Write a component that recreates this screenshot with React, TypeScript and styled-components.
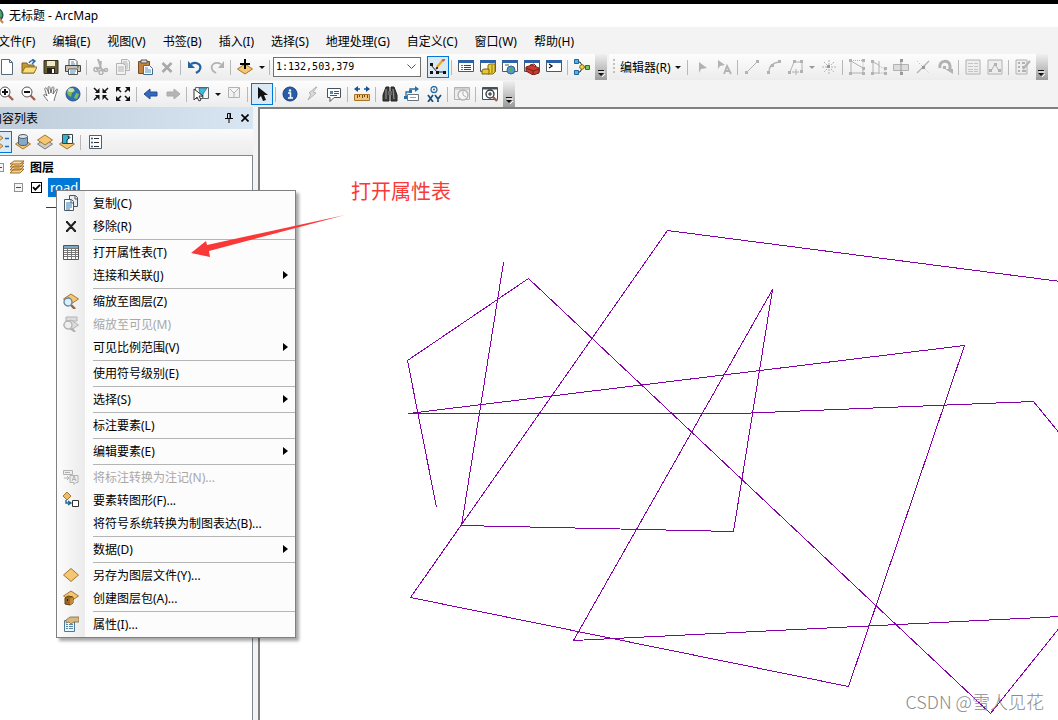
import React from "react";
import styled, { createGlobalStyle, css } from "styled-components";

const GlobalStyle = createGlobalStyle`
  * { box-sizing: border-box; }
  html, body { margin: 0; padding: 0; background: #f3f3f3; }
  body, button, select, input {
    font-family: "Noto Sans", "Noto Sans CJK SC", sans-serif;
    font-size: 12px;
    color: #000;
  }
`;

const Page = styled.div`
  position: relative;
  display: flex;
  flex-direction: column;
  min-height: 100vh;
  overflow: hidden;
  background: #f3f3f3;
`;

const TitleBar = styled.header`
  display: flex;
  align-items: center;
  gap: 5px;
  height: 27px;
  border-top: 4px solid #000;
  background: #fff;
`;

const TitleLogo = styled.svg`
  width: 16px;
  height: 16px;
  margin-left: -12px;
`;

const Title = styled.h1`
  margin: 0;
  font-size: 12px;
  font-weight: 400;
  line-height: 22px;
`;

const MenuBar = styled.nav`
  display: flex;
  gap: 1px;
  height: 27px;
  margin-left: -10px;
`;

const plainButton = css`
  display: flex;
  align-items: center;
  border: 0;
  background: none;
  padding: 0;
  white-space: nowrap;
`;

const MenuBarItem = styled.button`
  ${plainButton}
  padding: 0 8px;
`;

const ToolbarRow = styled.div`
  display: flex;
  height: 27px;
`;

const Toolbar = styled.div<{ $pull?: boolean }>`
  display: flex;
  align-items: center;
  height: 26px;
  margin-left: ${(p) => (p.$pull ? "-4px" : "2px")};
  background: linear-gradient(#fdfdfd, #ececec);
`;

const ToolButton = styled.button<{ $active?: boolean }>`
  display: flex;
  align-items: center;
  justify-content: center;
  flex: none;
  width: 22px;
  height: 22px;
  padding: 0;
  border: 1px solid ${(p) => (p.$active ? "#0078d7" : "transparent")};
  background: ${(p) => (p.$active ? "#dbe9f5" : "transparent")};
`;

const CaretButton = styled.button`
  ${plainButton}
  justify-content: center;
  width: 11px;
  height: 22px;
`;

const LabelButton = styled.button`
  ${plainButton}
  gap: 4px;
  height: 22px;
  padding: 0 4px 0 5px;
`;

const Separator = styled.span`
  flex: none;
  width: 1px;
  height: 15px;
  margin: 0 3px 0 2px;
  background: #b8b8b8;
`;

const Grip = styled.span`
  width: 2px;
  height: 16px;
  margin-left: 4px;
  background: repeating-linear-gradient(#c0c0c0 0 2px, transparent 2px 4px);
`;

const Overflow = styled.button`
  display: flex;
  align-items: flex-end;
  justify-content: center;
  align-self: stretch;
  width: 12px;
  margin-left: 2px;
  padding: 0 0 3px;
  border: 0;
  background: linear-gradient(#f0f0f0, #9c9c9c);
`;

const ScaleBox = styled.label`
  display: flex;
  align-items: center;
  width: 148px;
  height: 20px;
  margin-right: 6px;
  padding-right: 4px;
  border: 1px solid #707070;
  background: #fff;
`;

const ScaleSelect = styled.select`
  flex: 1;
  min-width: 0;
  appearance: none;
  border: 0;
  padding: 0 0 0 2px;
  background: none;
  font-family: "DejaVu Sans Mono", monospace;
  font-size: 10px;
  line-height: 16px;
`;

const Workspace = styled.div`
  display: flex;
  flex: 1;
  gap: 5px;
  margin-top: -1px;
`;

const Contents = styled.aside`
  display: flex;
  flex-direction: column;
  flex: none;
  width: 253px;
`;

const PanelHeader = styled.div`
  display: flex;
  align-items: center;
  height: 22px;
  background: linear-gradient(90deg, #bfcddb, #d8e5f2);
`;

const PanelTitle = styled.h2`
  flex: 1;
  margin: 0 0 0 -10px;
  font-size: 12px;
  font-weight: 400;
`;

const PanelButton = styled.button`
  ${plainButton}
  justify-content: center;
  width: 16px;
  height: 18px;
`;

const PanelTools = styled.div`
  display: flex;
  align-items: center;
  height: 26px;
  margin-left: -10px;
  background: linear-gradient(#fafafa, #ececec);
`;

const Tree = styled.div`
  flex: 1;
  padding-top: 1px;
  border: 1px solid #828790;
  border-left: 0;
  border-bottom: 0;
  background: #fff;
`;

const TreeRow = styled.div<{ $level: number }>`
  display: flex;
  align-items: center;
  gap: ${(p) => (p.$level ? "8px" : "5px")};
  height: 20px;
  margin-left: ${(p) => (p.$level ? "14px" : "-5px")};
`;

const TreeGroup = styled.span`
  font-weight: 700;
`;

const Expander = styled.button`
  display: flex;
  align-items: center;
  justify-content: center;
  width: 9px;
  height: 9px;
  padding: 0;
  border: 1px solid #919191;
  background: #f5f5f5;
  &::before { content: ""; width: 5px; height: 1px; background: #31479b; }
`;

const LayerLabel = styled.label`
  display: flex;
  align-items: center;
  gap: 6px;
`;

const LayerCheck = styled.input`
  appearance: none;
  width: 11px;
  height: 11px;
  margin: 0;
  border: 1px solid #000;
  background: #fff;
  &:checked {
    background: #fff url("data:image/svg+xml,%3Csvg xmlns='http://www.w3.org/2000/svg' viewBox='0 0 9 9'%3E%3Cpath d='M1 4.2l2.3 2.4L8 1.8' fill='none' stroke='black' stroke-width='1.8'/%3E%3C/svg%3E");
  }
`;

const LayerName = styled.span`
  padding: 0 2px;
  background: #0078d7;
  color: #fff;
  font-size: 13px;
  line-height: 19px;
`;

const LayerSymbol = styled.div`
  width: 32px;
  height: 1px;
  margin: 10px 0 0 46px;
  background: #8400a8;
`;

const MapView = styled.main`
  position: relative;
  flex: 1;
  overflow: hidden;
  border-top: 2px solid #808080;
  border-left: 2px solid #808080;
  background: #fff;
`;

const MapLines = styled.svg`
  position: absolute;
  left: 0;
  top: 0;
  width: 798px;
  height: 611px;
  fill: none;
  stroke: #8400a8;
  shape-rendering: crispEdges;
`;

const Watermark = styled.span`
  position: absolute;
  right: 14px;
  bottom: 5px;
  color: #8c8c8c;
  font-family: "Noto Sans CJK SC", sans-serif;
  font-size: 18px;
  font-weight: 300;
  line-height: 27px;
`;

const Note = styled.p`
  position: absolute;
  left: 351px;
  top: 179px;
  margin: 0;
  color: #fb3838;
  font-size: 20px;
  line-height: 26px;
`;

const NoteArrow = styled.svg`
  position: absolute;
  left: 190px;
  top: 212px;
  width: 160px;
  height: 50px;
  pointer-events: none;
`;

const ContextMenu = styled.div`
  position: absolute;
  left: 56px;
  top: 190px;
  width: 240px;
  padding: 1px 0;
  border: 1px solid #808080;
  background: linear-gradient(90deg, #fcfcfc, #ebebeb) 0 0 / 28px 100% no-repeat #fcfcfc;
  box-shadow: 3px 3px 3px rgba(0, 0, 0, 0.35);
`;

const ContextItem = styled.button`
  ${plainButton}
  width: 100%;
  height: 23px;
  padding: 0 7px 2px 0;
  text-align: left;
  &:disabled { color: #a8a8a8; }
`;

const ContextIcon = styled.span`
  display: flex;
  justify-content: center;
  width: 28px;
  margin-right: 8px;
`;

const ContextText = styled.span`
  flex: 1;
`;

const ContextRule = styled.hr`
  height: 1px;
  margin: 1px 0 1px 36px;
  border: 0;
  background: #b5b5b5;
`;

const Glyph = styled.svg`
  flex: none;
  display: block;
  fill: none;
`;

const g = "#b2b2b2";

const diamond = (y: number, fill = "#f3c774", stroke = "#a8742a") => (
  <path d={`M8 ${y}l7.5 5l-7.5 5l-7.5 -5z`} fill={fill} stroke={stroke} />
);
const lens = (x: number, y: number, color: string, tint: string, handle: string) => (
  <>
    <path d={`M${x + 3} ${y + 3}l4 4`} stroke={handle} strokeWidth="2.4" />
    <circle cx={x} cy={y} r="4" fill={tint} stroke={color} strokeWidth="1.3" />
  </>
);
const windowFrame = (
  <>
    <path d="M.5 1.5h15v11H.5z" fill="#fff" stroke="#505860" />
    <path d="M0 1h16v3H0z" fill="#2d62a8" />
  </>
);
const node = (x: number, y: number, c = g) => <rect x={x} y={y} width="3" height="3" fill={c} />;

const icons: Record<string, React.ReactNode> = {
  new: <path d="M2.5 .5h8l3 3v12h-11zM10.5 .5v3h3" fill="#fff" stroke="#566b7a" />,
  open: (
    <>
      <path d="M1 14V4h5l1 2h6v8z" fill="#c49a35" stroke="#7d651c" />
      <path d="M1 14l3-6h12l-3 6z" fill="#f7dc7d" stroke="#8c7226" />
      <path d="M8 4c1-2 3-3 5-2M11 0l3 2-3 3" stroke="#246aaa" strokeWidth="1.4" />
    </>
  ),
  save: (
    <>
      <path d="M1 1.5h14v13H1z" fill="#635a36" stroke="#332e1d" />
      <path d="M4 2h8v5H4z" fill="#efe9c5" />
      <path d="M4 9h8v5H4z" fill="#24221b" />
      <path d="M9 10h2v4H9z" fill="#fff" />
    </>
  ),
  print: (
    <>
      <path d="M4 7V.5h6l2 2V7" fill="#fff" stroke="#555" />
      <path d="M.5 6.5h15v6H.5z" fill="#c8c3b6" stroke="#444" />
      <path d="M3.500 10h9v5.500h-9z" fill="#fff" stroke="#555" />
      <path d="M5 12h6M5 14h5M6 3h3M6 5h4" stroke="#4b8abb" />
      <path d="M12 8h2" stroke="#287228" />
    </>
  ),
  cut: (
    <>
      <path d="M5 0l3 9M8 2l-1 7 5 3M7 9l-4 1" stroke={g} strokeWidth="2" />
      <circle cx="3" cy="10.500" r="2" stroke={g} strokeWidth="1.500" />
      <circle cx="8" cy="13.500" r="2" stroke={g} strokeWidth="1.500" />
      <circle cx="13" cy="11" r="1.500" stroke={g} strokeWidth="1.500" />
    </>
  ),
  copyOff: (
    <>
      <path d="M6.500 .5h6l2 2v9h-8z" fill="#eee" stroke={g} />
      <path d="M1.500 4.500h7l2 2v9h-9z" fill="#f3f3f3" stroke={g} />
      <path d="M3 8h6M3 10h6M3 12h6M8 3h4M8 5h5M11 7h2M11 9h2" stroke={g} />
    </>
  ),
  copy: (
    <>
      <path d="M6.500 .5h6l2 2v9h-8z" fill="#e6eef3" stroke="#4c5660" />
      <path d="M1.500 4.500h7l2 2v9h-9z" fill="#fff" stroke="#4c5660" />
      <path d="M3 8h5M3 10h6M3 12h6M3 14h4" stroke="#267dbd" />
      <path d="M12 1v3h2M8 5v3h3" stroke="#4c5660" />
    </>
  ),
  paste: (
    <>
      <path d="M1.500 2.500h11v12h-11z" fill="#c3833e" stroke="#7a4d20" />
      <path d="M4 1h6v3H4z" fill="#ddd" stroke="#555" />
      <path d="M6.500 6.500h6l3 3v6h-9z" fill="#fff" stroke="#456a8c" />
      <path d="M8 9h3M8 11h6M8 13h6" stroke="#4b91c5" />
    </>
  ),
  del: <path d="M3.500 4l9 9M12.500 4l-9 9" stroke="#a9a9a9" strokeWidth="2.600" />,
  undo: (
    <>
      <path d="M4 5c6-3 12 1 8 7l-3 2" stroke="#24629f" strokeWidth="2.200" />
      <path d="M1 2v7h7z" fill="#24629f" />
    </>
  ),
  redo: (
    <>
      <path d="M12 5C6 2 0 6 4 12l3 2" stroke={g} strokeWidth="1.800" />
      <path d="M15 2v7H9z" fill={g} />
    </>
  ),
  add: (
    <>
      {diamond(5)}
      <path d="M8 0v10M3 5h10" stroke="#000" strokeWidth="2" />
    </>
  ),
  sketch: (
    <>
      <path d="M1 6l6 7h8" stroke="#222" />
      {node(0, 4, "#111")}{node(0, 12, "#111")}{node(6, 12, "#111")}{node(13, 12, "#111")}
      <path d="M7 8l6-7" stroke="#efa91c" strokeWidth="2.400" />
      <path d="M12.500 2l2-2" stroke="#d25143" strokeWidth="2.400" />
      <path d="M6 10l2-1-1-1z" fill="#222" stroke="#222" />
    </>
  ),
  toc: (
    <>
      {windowFrame}
      <path d="M3 6.500h2M3 8.500h2M3 10.500h2" stroke="#287ac1" />
      <path d="M6 6.500h7M6 8.500h7M6 10.500h7" stroke="#444" />
    </>
  ),
  catalog: (
    <>
      {windowFrame}
      <path d="M8 6l2-1h5v8l-2 2H8z" fill="#f0cf35" stroke="#806b16" />
      <path d="M2 11l2-1h5v5H2z" fill="#e7c72b" stroke="#776211" />
      <path d="M12 6v8" stroke="#8a7418" />
    </>
  ),
  search: (
    <>
      {windowFrame}
      <circle cx="9" cy="11" r="4" fill="#4e99d4" stroke="#326597" />
      <path d="M7 9l3-1 1 3-3 2z" fill="#61aa4c" />
      <path d="M3 6h4" stroke="#555" />
    </>
  ),
  toolbox: (
    <>
      {windowFrame}
      <path d="M2 8l6-2 7 3v5l-6 2-7-4z" fill="#c93a2d" stroke="#772018" />
      <path d="M2 9l7 3 6-2M9 12v4M6 6l4-1 2 2" stroke="#751e17" />
    </>
  ),
  python: (
    <>
      {windowFrame}
      <path d="M3 5l3 2-3 2" stroke="#111" strokeWidth="1.300" />
    </>
  ),
  model: (
    <>
      <path d="M4 3h2l3 5-3 5H4M9 8h5" stroke="#222" />
      <path d="M.5 .5h4v4h-4zM.5 11.500h4v4h-4z" fill="#58b0e8" stroke="#1c649e" />
      <circle cx="8" cy="8" r="2.300" fill="#f4d548" stroke="#7c6919" />
      <path d="M11.500 6.500h4v4h-4z" fill="#75c455" stroke="#327327" />
    </>
  ),
  editArrow: <path d="M5 3v11l2-4 6-1z" fill={g} />,
  editLabel: (
    <>
      <path d="M2 1v9l2-3 5-1z" fill={g} />
      <path d="M8 15l3-8 4 8M9 12h5" stroke={g} strokeWidth="1.800" />
    </>
  ),
  line: <><path d="M3 13L13 3" stroke={g} />{node(1, 12)}{node(12, 1)}</>,
  arc: <><path d="M3 13C3 8 6 4 13 3" stroke={g} strokeWidth="1.300" />{node(1, 12)}{node(5, 5)}{node(12, 1)}</>,
  trace: <><path d="M2 13L6 3h8v10M4 13h7M8 10v6" stroke={g} />{node(0, 12)}{node(5, 1)}{node(12, 1)}{node(12, 11)}</>,
  point: (
    <>
      <path d="M8 1v5M8 10v5M1 8h5M10 8h5M3 3l3 3M10 10l3 3M13 3l-3 3M6 10l-3 3" stroke={g} strokeDasharray="2 1" />
      {node(6, 6, "#999")}
    </>
  ),
  vertices: <><path d="M2 2v12h12V9L2 2" stroke={g} /><path d="M4 1.500h10V9" stroke={g} strokeDasharray="1 1" />{node(0, 0)}{node(0, 13)}{node(13, 0)}{node(13, 8)}{node(13, 13)}</>,
  reshape: <><path d="M2 3v11h6M2 3l6 3M8 2v13" stroke={g} /><path d="M8 7l6 3v4H8" stroke={g} strokeDasharray="1 1" />{node(0, 1)}{node(0, 13)}{node(13, 8)}{node(13, 13)}</>,
  cutPoly: <><path d="M.5 5.500h15v6H.5z" fill="#ddd" stroke={g} /><path d="M8 1v14" stroke="#999" />{node(7, 0, "#999")}{node(7, 13, "#999")}</>,
  split: <><path d="M2 14L14 2" stroke={g} strokeWidth="1.300" /><path d="M2 2l12 12" stroke={g} strokeDasharray="1 2" />{node(7, 7, "#999")}</>,
  rotate: <><path d="M3 9C1 1 13 0 13 7v4" stroke={g} strokeWidth="3" /><path d="M8 10h8v5z" fill={g} />{node(6, 7)}</>,
  attributes: <><path d="M1 1h14v14H1z" fill="#eee" stroke={g} /><path d="M3 4.500h5M9 4.500h4M3 7.500h5M9 7.500h4M3 10.500h5M9 10.500h4M3 12.500h5M9 12.500h4" stroke="#c4c4c4" /></>,
  sketchProps: <><path d="M1 1h14v14H1z" fill="#eee" stroke={g} /><path d="M4 12l4-7 4 7" stroke={g} />{node(2, 10)}{node(7, 4)}{node(11, 10)}</>,
  create: <><path d="M1 1h11v14H1z" fill="#eee" stroke={g} /><path d="M3 4h2M3 8h2M3 12h2M7 4h3M7 8h3M7 12h4" stroke={g} strokeWidth="2" /><path d="M8 10l7-8" stroke={g} strokeWidth="2" /></>,
  zoomIn: <><path d="M9 9l5 5" stroke="#9c5b4c" strokeWidth="2.300" /><circle cx="6" cy="6" r="5" fill="#fff" stroke="#555" /><path d="M3 6h6M6 3v6" stroke="#111" strokeWidth="2" /></>,
  zoomOut: <><path d="M9 9l5 5" stroke="#9c5b4c" strokeWidth="2.300" /><circle cx="6" cy="6" r="5" fill="#fff" stroke="#555" /><path d="M3 6h6" stroke="#111" strokeWidth="2" /></>,
  pan: <path d="M5 15L1 10c-1-2 1-2 3 0L2 4c-1-2 1-3 2-1l2 5-1-6c0-2 2-2 2 0l1 5 1-5c0-2 2-1 2 0l-1 6 3-4c1-2 2-1 1 1l-2 6-1 4" fill="#fff" stroke="#555" strokeWidth=".8" />,
  globe: (
    <>
      <circle cx="8" cy="8" r="7" fill="#2e72b6" stroke="#285689" />
      <path d="M3 3l5-1 2 3-3 2-1 4-3-2-1-3zM11 7l3 1-2 5-3-1z" fill="#83bb57" />
      <ellipse cx="6" cy="4" rx="3" ry="2" fill="#fff" opacity=".55" />
    </>
  ),
  zoomInFixed: (
    <>
      <path d="M1 2l4 4M15 2l-4 4M1 14l4-4M15 14l-4-4" stroke="#111" strokeWidth="1.500" />
      <path d="M6.500 2v5H2zM9.500 2v5H14zM6.500 14V9H2zM9.500 14V9H14z" fill="#111" />
    </>
  ),
  zoomOutFixed: (
    <>
      <path d="M6 6L2 2M10 6l4-4M6 10l-4 4M10 10l4 4" stroke="#111" strokeWidth="1.500" />
      <path d="M1 6V1h5zM15 6V1h-5zM1 10v5h5zM15 10v5h-5z" fill="#111" />
    </>
  ),
  back: <path d="M1 8l6-5v3h7v4H7v3z" fill="#3469bd" stroke="#234f97" />,
  forward: <path d="M15 8L9 3v3H2v4h7v3z" fill="#b5b5b5" stroke="#aaa" />,
  select: (
    <>
      <path d="M2.500 1.500h13v11h-13z" fill="#f5f5f5" stroke="#606870" />
      <path d="M6 2h8l-4 6v4l-3-4z" fill="#39bce5" stroke="#555" strokeWidth=".7" />
      <path d="M1 3v11l3-3 2 4 2-1-2-4h4z" fill="#fff" stroke="#333" />
    </>
  ),
  clear: <path d="M2.500 1.500h11v10h-11zM4 3l4 4 5-5M8 7v4" fill="#f1f1f1" stroke={g} />,
  pointer: <path d="M4 1v12l3-3 2 5 3-1-2-5h4z" fill="#111" />,
  info: (
    <>
      <circle cx="8" cy="8" r="7" fill="#285ea8" stroke="#183f79" />
      <path d="M6 7h2.500v5M6 12h5" stroke="#fff" strokeWidth="1.500" />
      <circle cx="8" cy="4.500" r="1.200" fill="#fff" />
    </>
  ),
  bolt: <path d="M12 1L5 7l2 1-3 6 8-7-3-1 4-5z" fill="#ddd" stroke={g} />,
  popup: (
    <>
      <path d="M1.500 2.500h13v9H8l-4 4v-4H1.500z" fill="#fff" stroke="#46535e" />
      <path d="M4 5h3v3H4z" fill="#4689be" />
      <path d="M8 5.500h5M8 7.500h5M4 9.500h7" stroke="#555" />
    </>
  ),
  measure: (
    <>
      <path d="M1 3h5M10 3h5" stroke="#17538b" strokeWidth="1.600" />
      <path d="M4 0v6L0 3zM12 0v6l4-3z" fill="#17538b" />
      <path d="M.5 8.500h15v6H.5z" fill="#f0c77c" stroke="#a77428" />
      <path d="M3.500 9v3M5.500 9v2M8.500 9v3M10.500 9v2M13.500 9v3" stroke="#6b4a18" />
    </>
  ),
  find: (
    <>
      <path d="M4 1h3v14H1V9zM9 1h3l3 8v6H9z" fill="#3c3c3c" stroke="#202020" />
      <path d="M6 5h4v4H6z" fill="#666" />
      <path d="M4 3v10M11 3l1 10" stroke="#999" />
    </>
  ),
  route: (
    <>
      <path d="M3.500 8.500h11v6h-11z" fill="#fff" stroke="#68747d" />
      <path d="M2 11V6h4V3h6" stroke="#286da2" strokeWidth="1.300" />
      <path d="M11 0l4 3-4 3z" fill="#286da2" />
      {node(0, 10, "#286da2")}{node(5, 4, "#286da2")}
      <path d="M6 11.500h6" stroke="#999" />
    </>
  ),
  xy: (
    <>
      <circle cx="8" cy="3.500" r="3" stroke="#286da2" strokeWidth="1.300" />
      <circle cx="8" cy="3.500" r="1" fill="#286da2" />
      <path d="M2 9l5 7M7 9l-5 7M9 9l3 4 3-4M12 12v4" stroke="#174f80" strokeWidth="1.700" />
    </>
  ),
  time: (
    <>
      <path d="M.5 1.500h15v12H.5zM1 3h14" fill="#eee" stroke={g} />
      <circle cx="9" cy="9" r="5" fill="#f5f5f5" stroke={g} strokeWidth="1.300" />
      <path d="M9 5v4l3 2" stroke={g} />
    </>
  ),
  viewer: (
    <>
      <path d="M.5 1.500h15v12H.5z" fill="#fff" stroke="#44515b" />
      <path d="M1 2.500h14" stroke="#44515b" strokeWidth="2" />
      {lens(8, 8, "#333", "#f0f7fc", "#9b6452")}
      <path d="M6 8h4M8 6v4" stroke="#222" />
    </>
  ),
  drawOrder: (
    <>
      <path d="M6 1l4 3-4 3-4-3zM6 9l4 3-4 3-4-3z" fill="#f1c47a" stroke="#a97b36" />
      <path d="M12 4.500h4M12 12.500h4" stroke="#246aaa" strokeWidth="1.600" />
    </>
  ),
  source: (
    <>
      {diamond(5)}
      <path d="M3.500 2v8c1 2 8 2 9 0V2" fill="#86a8cb" stroke="#505c68" />
      <ellipse cx="8" cy="2.500" rx="4.500" ry="2" fill="#dce6ef" stroke="#505c68" />
    </>
  ),
  visible: <>{diamond(5, "#ccc", "#777")}{diamond(1)}</>,
  selection: (
    <>
      {diamond(5)}
      <path d="M3.500 .5h10v9h-10z" fill="#fff" stroke="#34444f" />
      <path d="M4 1h6l2 3-4 2v3H4z" fill="#2fb3cf" />
      <path d="M9 2l1 2-2 2v3" stroke="#222" />
    </>
  ),
  options: (
    <>
      <path d="M2.500 1.500h12v13h-12z" fill="#fff" stroke="#4e6171" />
      <path d="M7 4.500h5M7 8.500h5M7 12.500h5" stroke="#333" />
      <circle cx="5" cy="4.500" r="1" fill="#2c5585" /><circle cx="5" cy="8.500" r="1" fill="#2c5585" /><circle cx="5" cy="12.500" r="1" fill="#2c5585" />
    </>
  ),
  layers: (
    <>
      <path d="M1 14l4-4h10l-4 4zM1 11l4-4h10l-4 4zM1 8l4-4h10l-4 4z" fill="#f4d08b" stroke="#a36e26" />
      <path d="M1 5l4-3h10l-4 3z" fill="#f9dfaa" stroke="#a36e26" />
    </>
  ),
  remove: <path d="M4 4l8 9M12 4l-8 9M3 4h2M11 4h2M3 13h2M11 13h2" stroke="#222" strokeWidth="2" />,
  table: (
    <>
      <path d="M.5 1.500h15v14H.5z" fill="#fff" stroke="#555" />
      <path d="M1 3h14" stroke="#7ba9c6" strokeWidth="2" />
      <path d="M1 4.500h14M1 6.500h14M1 8.500h14M1 10.500h14M1 12.500h14M4.500 4v11M8.500 4v11M12.500 4v11" stroke="#777" />
    </>
  ),
  zoomLayer: <>{diamond(1)}{lens(5, 9, "#6485a0", "#d9effa", "#9b5f43")}</>,
  zoomVisible: <><path d="M3 1h11v4H3z" fill="#ddd" stroke={g} />{diamond(4, "#ddd", g)}{lens(5, 9, g, "#eee", g)}</>,
  convertLabel: (
    <>
      <path d="M.5 1.500h9v4h-9zM7 6.500h8v7h-2l-2 2v-2H7zM2 3.500h5" fill="#eee" stroke={g} />
      <path d="M1 9h5M4 7l2 2-2 2M9 12l2-5 2 5M9.500 10.500h3" stroke={g} />
    </>
  ),
  convertGraphic: (
    <>
      <path d="M4 0l4 4-4 4-4-4z" fill="#efbd67" stroke="#a87629" />
      <path d="M3 8v3h4M5 9l3 2-3 2" stroke="#1b6792" strokeWidth="1.400" />
      <path d="M9.500 8.500h6v6h-6z" fill="#fff" stroke="#333" />
    </>
  ),
  layerFile: <path d="M8 1.500l7.500 6.500L8 14.500 .5 8z" fill="#f3c774" stroke="#a8742a" />,
  layerPackage: (
    <>
      {diamond(1)}
      <path d="M2 8l3-2 5 1v6l-3 2-5-1z" fill="#9a6825" stroke="#60400e" />
      <path d="M7 9l3-2v6l-3 2z" fill="#c48b3b" />
      <path d="M4 9h1v2H4z" fill="#2c1b04" />
    </>
  ),
  properties: (
    <>
      <path d="M1.500 4.500h10v11h-10z" fill="#eaf5fc" stroke="#4e7896" />
      <path d="M3 8.500h2M6 8.500h4M3 10.500h2M6 10.500h4M3 12.500h2M6 12.500h4" stroke="#5686a9" />
      <path d="M3 4l4-3 9 0v5l-5 0-3 2-2-2-3 1z" fill="#d6b880" stroke="#826740" strokeWidth=".8" />
    </>
  ),
};

const Icon = ({ name }: { name: string }) => (
  <Glyph width="16" height="16" viewBox="0 0 16 16" aria-hidden="true">{icons[name]}</Glyph>
);
const Caret = ({ color = "#111" }: { color?: string }) => (
  <Glyph width="6" height="3" viewBox="0 0 6 3" aria-hidden="true"><path d="M0 0h6L3 3z" fill={color} /></Glyph>
);
const OverflowButton = ({ label }: { label: string }) => (
  <Overflow aria-label={label}>
    <Glyph width="7" height="7" viewBox="0 0 7 7">
      <path d="M1 2h6M4 7l3-3" stroke="#fff" />
      <path d="M0 .5h6" stroke="#111" />
      <path d="M0 3h6L3 6z" fill="#111" />
    </Glyph>
  </Overflow>
);

type Tool = string | [name: string, label: string];
const Tools = ({ items, active }: { items: Tool[]; active?: string }) => (
  <>
    {items.map((item, i) => {
      if (item === "|") return <Separator key={i} />;
      if (item === "v" || item === "v-off")
        return <CaretButton key={i} aria-label="更多"><Caret color={item === "v" ? "#111" : "#999"} /></CaretButton>;
      const [name, label] = item as [string, string];
      return (
        <ToolButton key={i} aria-label={label} $active={name === active}>
          <Icon name={name} />
        </ToolButton>
      );
    })}
  </>
);

const standardTools: Tool[] = [
  ["new", "新建"], ["open", "打开"], ["save", "保存"], ["print", "打印"], "|",
  ["cut", "剪切"], ["copyOff", "复制"], ["paste", "粘贴"], ["del", "删除"], "|",
  ["undo", "撤消"], ["redo", "恢复"], "|", ["add", "添加数据"], "v", "|",
];
const windowTools: Tool[] = [
  ["sketch", "编辑器工具条"], "|", ["toc", "内容列表"], ["catalog", "目录"], ["search", "搜索"],
  ["toolbox", "工具箱"], ["python", "Python"], "|", ["model", "模型构建器"],
];
const editorTools: Tool[] = [
  "|", ["editArrow", "编辑工具"], ["editLabel", "编辑注记"], "|",
  ["line", "直线段"], ["arc", "弧段"], ["trace", "追踪"], "v-off", ["point", "点"], "|",
  ["vertices", "编辑折点"], ["reshape", "整形"], ["cutPoly", "裁剪面"], ["split", "分割"], ["rotate", "旋转"], "|",
  ["attributes", "属性"], ["sketchProps", "草图属性"], "|", ["create", "创建要素"],
];
const mapTools: Tool[] = [
  ["zoomIn", "放大"], ["zoomOut", "缩小"], ["pan", "平移"], ["globe", "全图"], "|",
  ["zoomInFixed", "固定比例放大"], ["zoomOutFixed", "固定比例缩小"], "|",
  ["back", "上一视图"], ["forward", "下一视图"], "|", ["select", "选择要素"], "v", ["clear", "清除选择"], "|",
  ["pointer", "选择元素"], "|", ["info", "识别"], ["bolt", "超链接"], ["popup", "HTML 弹出窗口"], "|",
  ["measure", "测量"], "|", ["find", "查找"], ["route", "查找路径"], ["xy", "转到 XY"], "|",
  ["time", "时间滑块"], "|", ["viewer", "查看器"],
];
const contentsTools: Tool[] = [
  ["drawOrder", "按绘制顺序列出"], ["source", "按源列出"], ["visible", "按可见性列出"],
  ["selection", "按选择列出"], "|", ["options", "选项"],
];

const menus = ["文件(F)", "编辑(E)", "视图(V)", "书签(B)", "插入(I)", "选择(S)", "地理处理(G)", "自定义(C)", "窗口(W)", "帮助(H)"];

type Entry = { text: string; icon?: string; sub?: boolean; off?: boolean };
const contextGroups: Entry[][] = [
  [{ text: "复制(C)", icon: "copy" }, { text: "移除(R)", icon: "remove" }],
  [{ text: "打开属性表(T)", icon: "table" }, { text: "连接和关联(J)", sub: true }],
  [
    { text: "缩放至图层(Z)", icon: "zoomLayer" },
    { text: "缩放至可见(M)", icon: "zoomVisible", off: true },
    { text: "可见比例范围(V)", sub: true },
  ],
  [{ text: "使用符号级别(E)" }],
  [{ text: "选择(S)", sub: true }],
  [{ text: "标注要素(L)" }],
  [{ text: "编辑要素(E)", sub: true }],
  [
    { text: "将标注转换为注记(N)...", icon: "convertLabel", off: true },
    { text: "要素转图形(F)...", icon: "convertGraphic" },
    { text: "将符号系统转换为制图表达(B)..." },
  ],
  [{ text: "数据(D)", sub: true }],
  [{ text: "另存为图层文件(Y)...", icon: "layerFile" }, { text: "创建图层包(A)...", icon: "layerPackage" }],
  [{ text: "属性(I)...", icon: "properties" }],
];

export default function App() {
  return (
    <Page>
      <GlobalStyle />
      <TitleBar>
        <TitleLogo viewBox="0 0 16 16" aria-hidden="true">
          <circle cx="8" cy="7" r="7" fill="#276c72" stroke="#163f4b" />
          <path d="M8 2l5 1 1 5-4 3z" fill="#55a361" />
          <path d="M10 9l5 6" stroke="#c18452" strokeWidth="2" />
        </TitleLogo>
        <Title>无标题 - ArcMap</Title>
      </TitleBar>
      <MenuBar>
        {menus.map((m) => <MenuBarItem key={m}>{m}</MenuBarItem>)}
      </MenuBar>
      <ToolbarRow>
        <Toolbar $pull>
          <Tools items={standardTools} />
          <ScaleBox>
            <ScaleSelect aria-label="比例尺">
              <option>1:132,503,379</option>
            </ScaleSelect>
            <Glyph width="9" height="6" viewBox="0 0 9 6" aria-hidden="true">
              <path d="M.5 .5l4 4 4-4" stroke="#555" />
            </Glyph>
          </ScaleBox>
          <Tools items={windowTools} active="sketch" />
          <OverflowButton label="标准工具条选项" />
        </Toolbar>
        <Toolbar>
          <Grip />
          <LabelButton>编辑器(R)<Caret /></LabelButton>
          <Tools items={editorTools} />
          <OverflowButton label="编辑器工具条选项" />
        </Toolbar>
      </ToolbarRow>
      <ToolbarRow>
        <Toolbar $pull>
          <Tools items={mapTools} active="pointer" />
          <OverflowButton label="工具条选项" />
        </Toolbar>
      </ToolbarRow>
      <Workspace>
        <Contents>
          <PanelHeader>
            <PanelTitle>内容列表</PanelTitle>
            <PanelButton aria-label="自动隐藏">
              <Glyph width="8" height="10" viewBox="0 0 8 10">
                <path d="M2.500 5.500v-5h3v5M0 5.500h8M4 6v4" stroke="#000" />
                <path d="M5 0v6" stroke="#000" />
              </Glyph>
            </PanelButton>
            <PanelButton aria-label="关闭">
              <Glyph width="8" height="8" viewBox="0 0 8 8">
                <path d="M.5 .5l7 7M7.500 .5l-7 7" stroke="#000" strokeWidth="1.600" />
              </Glyph>
            </PanelButton>
          </PanelHeader>
          <PanelTools>
            <Tools items={contentsTools} active="drawOrder" />
          </PanelTools>
          <Tree>
            <TreeRow $level={0}>
              <Expander aria-label="折叠图层" />
              <Icon name="layers" />
              <TreeGroup>图层</TreeGroup>
            </TreeRow>
            <TreeRow $level={1}>
              <Expander aria-label="折叠 road" />
              <LayerLabel>
                <LayerCheck type="checkbox" defaultChecked />
                <LayerName>road</LayerName>
              </LayerLabel>
            </TreeRow>
            <LayerSymbol />
          </Tree>
        </Contents>
        <MapView>
          <MapLines viewBox="259.5 108.5 798 611" aria-hidden="true">
            <path d="M1060 281L667 230 410 597 848 686 964 345 408 413H738L1033 401 1060 434M1060 626L990 713 528 278 407 360 436 507" />
            <path d="M503 262L461 525 733 531 772 289 573 640 1060 616" />
          </MapLines>
          <Watermark>CSDN @雪人见花</Watermark>
        </MapView>
      </Workspace>
      <ContextMenu role="menu">
        {contextGroups.map((group, i) => (
          <React.Fragment key={i}>
            {i > 0 && <ContextRule />}
            {group.map((e) => (
              <ContextItem key={e.text} role="menuitem" disabled={e.off}>
                <ContextIcon>{e.icon && <Icon name={e.icon} />}</ContextIcon>
                <ContextText>{e.text}</ContextText>
                {e.sub && (
                  <Glyph width="5" height="8" viewBox="0 0 5 8" aria-hidden="true">
                    <path d="M0 0l5 4-5 4z" fill="#000" />
                  </Glyph>
                )}
              </ContextItem>
            ))}
          </React.Fragment>
        ))}
      </ContextMenu>
      <Note>打开属性表</Note>
      <NoteArrow viewBox="190 212 160 50" aria-hidden="true">
        <path d="M191 253l15-12 1 4 138-30-136 36 1 6z" fill="#fb3838" />
      </NoteArrow>
    </Page>
  );
}
